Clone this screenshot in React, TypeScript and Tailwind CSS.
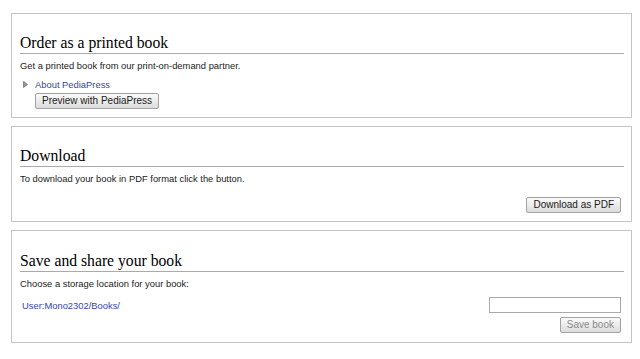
import React from "react";

const sans = { fontFamily: '"Liberation Sans", Arial, sans-serif' };

function Heading({ children }: { children: React.ReactNode }) {
  return (
    <h2
      className="text-[15.7px] leading-[20px] text-[#000] border-b border-[#aaaaaa]"
      style={{ fontFamily: '"Liberation Serif", "Times New Roman", serif' }}
    >
      {children}
    </h2>
  );
}

function Btn({ children, disabled }: { children: React.ReactNode; disabled?: boolean }) {
  return (
    <button
      className={
        "h-[16px] px-[6px] text-[10px] leading-[14px] border border-[#a2a2a2] rounded-[2px] bg-gradient-to-b from-[#fbfbfb] to-[#dcdcdc] " +
        (disabled ? "text-[#8a8a8a]" : "text-[#1a1a1a]")
      }
      style={sans}
    >
      {children}
    </button>
  );
}

export default function App() {
  return (
    <div className="w-[640px] h-[359px] bg-white pl-[11px] pr-[8px] pt-[13px] flex flex-col gap-[8px]" style={sans}>
      {/* Box 1 */}
      <div className="border border-[#c4c4c4] pl-[8px] pr-[7px] pt-[19px] pb-[7px] h-[105px]">
        <Heading>Order as a printed book</Heading>
        <p className="mt-[5px] text-[9.4px] leading-[13px] text-[#222]">
          Get a printed book from our print-on-demand partner.
        </p>
        <div className="mt-[6px] flex items-center pl-[3px] text-[9.4px] leading-[13px]">
          <svg width="5" height="7" viewBox="0 0 5 7" className="mr-[7px]">
            <path d="M0.5 0.5 L4.5 3.5 L0.5 6.5 Z" fill="#999" stroke="#555" strokeWidth="0.6" />
          </svg>
          <span className="text-[#3646a8]">About PediaPress</span>
        </div>
        <div className="mt-[2px] pl-[15px] flex">
          <Btn>Preview with PediaPress</Btn>
        </div>
      </div>

      {/* Box 2 */}
      <div className="border border-[#c4c4c4] pl-[8px] pr-[7px] pt-[19px] h-[96px]">
        <Heading>Download</Heading>
        <p className="mt-[5px] text-[9.4px] leading-[13px] text-[#222]">
          To download your book in PDF format click the button.
        </p>
        <div className="mt-[12px] flex justify-end pr-[3px]">
          <Btn>Download as PDF</Btn>
        </div>
      </div>

      {/* Box 3 */}
      <div className="border border-[#c4c4c4] pl-[8px] pr-[7px] pt-[20px] h-[113px]">
        <Heading>Save and share your book</Heading>
        <p className="mt-[5px] text-[9.4px] leading-[13px] text-[#222]">
          Choose a storage location for your book:
        </p>
        <div className="mt-[7px] flex justify-between items-start pr-[3px]">
          <span className="ml-[2px] mt-[2px] text-[9.4px] leading-[13px] text-[#3646a8]">User:Mono2302/Books/</span>
          <div className="flex flex-col items-end gap-[4px]">
            <input
              className="w-[132px] h-[16px] border border-[#a9a9a9] bg-white outline-none text-[10px] px-[2px]"
              style={sans}
            />
            <Btn disabled>Save book</Btn>
          </div>
        </div>
      </div>
    </div>
  );
}
